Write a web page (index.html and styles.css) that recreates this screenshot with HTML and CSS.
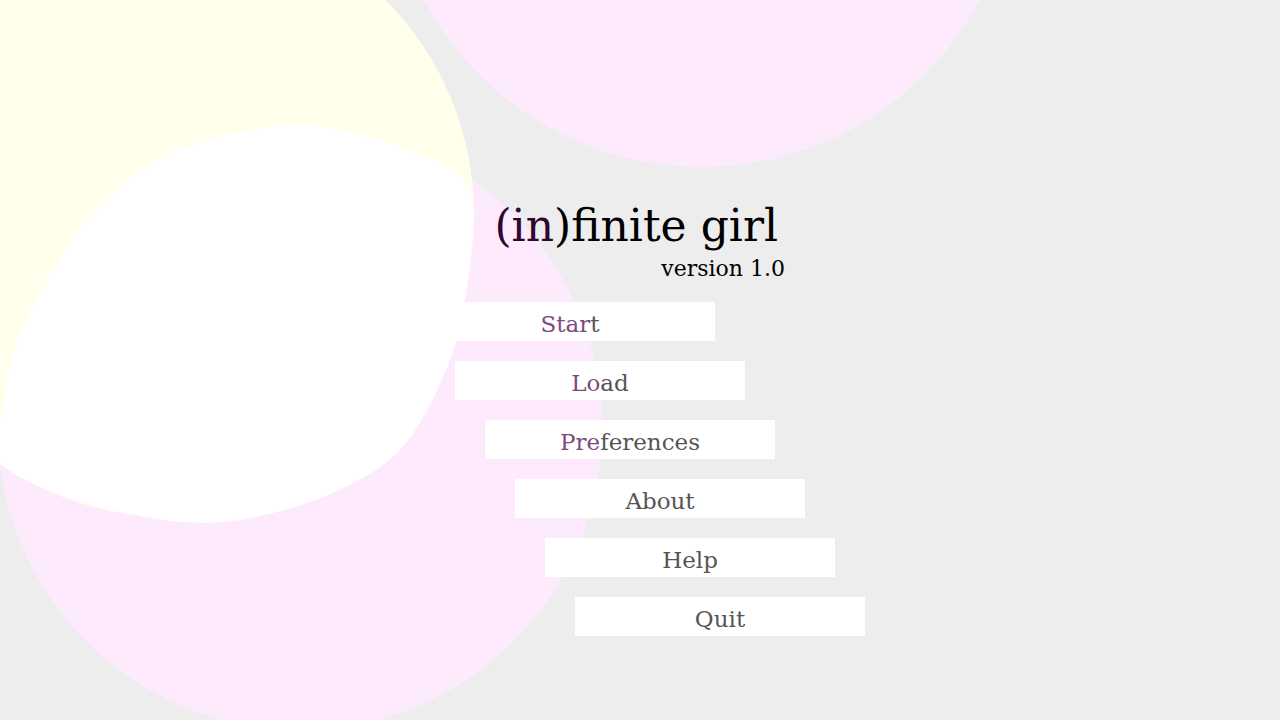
FILE: index.html
```html
<!DOCTYPE html>
<html lang="en">
<head>
<meta charset="utf-8">
<title>(in)finite girl</title>
<link rel="stylesheet" href="styles.css">
</head>
<body>
<div class="screen">
  <svg class="backdrop" width="1280" height="720" viewBox="0 0 1280 720" aria-hidden="true">
    <circle cx="300" cy="428" r="302" fill="#fdebfd"/>
    <circle cx="171" cy="214" r="303" fill="#ffffeb"/>
    <path fill="#ffffff" d="M300 125
      C339.5 125.5 388.7 142.2 417 153
      C443 162.8 459 174.5 468 188
      C476 203.5 473.2 220 472 240
      C470.8 260 467.8 287.2 463 310
      C458.2 332.8 453.5 353.7 443 377
      C432.5 400.3 418.3 430.7 400 450
      C381.7 469.3 358 481.7 333 493
      C308 504.3 275 513.2 250 518
      C225 522.8 208 523.8 183 522
      C158 520.2 125 513.5 100 507
      C75 500.5 50.7 491.7 33 483
      C15.3 474.3 -0.2 467.2 -6 455
      C-11.8 442.8 -1.8 428.7 2 410
      C5.8 391.3 8.3 365.2 17 343
      C25.7 320.8 36.2 300 50 277
      C63.8 254 78.3 226.2 100 205
      C121.7 183.8 146.7 163.3 180 150
      C213.3 136.7 260.5 124.5 300 125 Z"/>
    <circle cx="702" cy="-148" r="315" fill="#fdebfd"/>
  </svg>
  <main class="content">
    <header class="title-block">
      <h1 class="title"><span class="title-accent">(in</span>)finite girl</h1>
      <p class="version">version 1.0</p>
    </header>
    <nav class="menu">
      <a class="menu-item"><span class="hl">Star</span>t</a>
      <a class="menu-item"><span class="hl">Lo</span>ad</a>
      <a class="menu-item"><span class="hl">Pre</span>ferences</a>
      <a class="menu-item">About</a>
      <a class="menu-item">Help</a>
      <a class="menu-item">Quit</a>
    </nav>
  </main>
</div>
</body>
</html>
```
FILE: styles.css
```css
* { box-sizing: border-box; }
html, body {
  margin: 0;
  padding: 0;
  background: #ededed;
}
body {
  font-family: "DejaVu Serif", "Liberation Serif", serif;
  overflow: hidden;
}
.screen {
  position: relative;
  width: 1280px;
  height: 720px;
  overflow: hidden;
  background: #ededed;
}
.backdrop {
  position: absolute;
  left: 0;
  top: 0;
}
.content {
  position: relative;
  display: flex;
  flex-direction: column;
  align-items: flex-start;
  padding: 200px 0 0 425px;
}
.title-block {
  width: 360px;
  display: flex;
  flex-direction: column;
  align-items: flex-end;
}
.title {
  margin: 0 7px 0 0;
  font-size: 44px;
  line-height: 52px;
  font-weight: normal;
  color: #000;
}
.title-accent { color: #2e0630; }
.version {
  margin: 4px 0 0 0;
  font-size: 22px;
  line-height: 26px;
  color: #000;
}
.menu {
  margin-top: 20px;
  display: flex;
  flex-direction: column;
  gap: 20px;
}
.menu-item {
  display: block;
  width: 290px;
  height: 39px;
  padding-top: 5px;
  line-height: 34px;
  background: #ffffff;
  text-align: center;
  font-size: 23px;
  color: #555555;
  text-decoration: none;
}
.menu-item .hl { color: #7d4a80; }
.menu-item:nth-child(2) { margin-left: 30px; }
.menu-item:nth-child(3) { margin-left: 60px; }
.menu-item:nth-child(4) { margin-left: 90px; }
.menu-item:nth-child(5) { margin-left: 120px; }
.menu-item:nth-child(6) { margin-left: 150px; }
```
